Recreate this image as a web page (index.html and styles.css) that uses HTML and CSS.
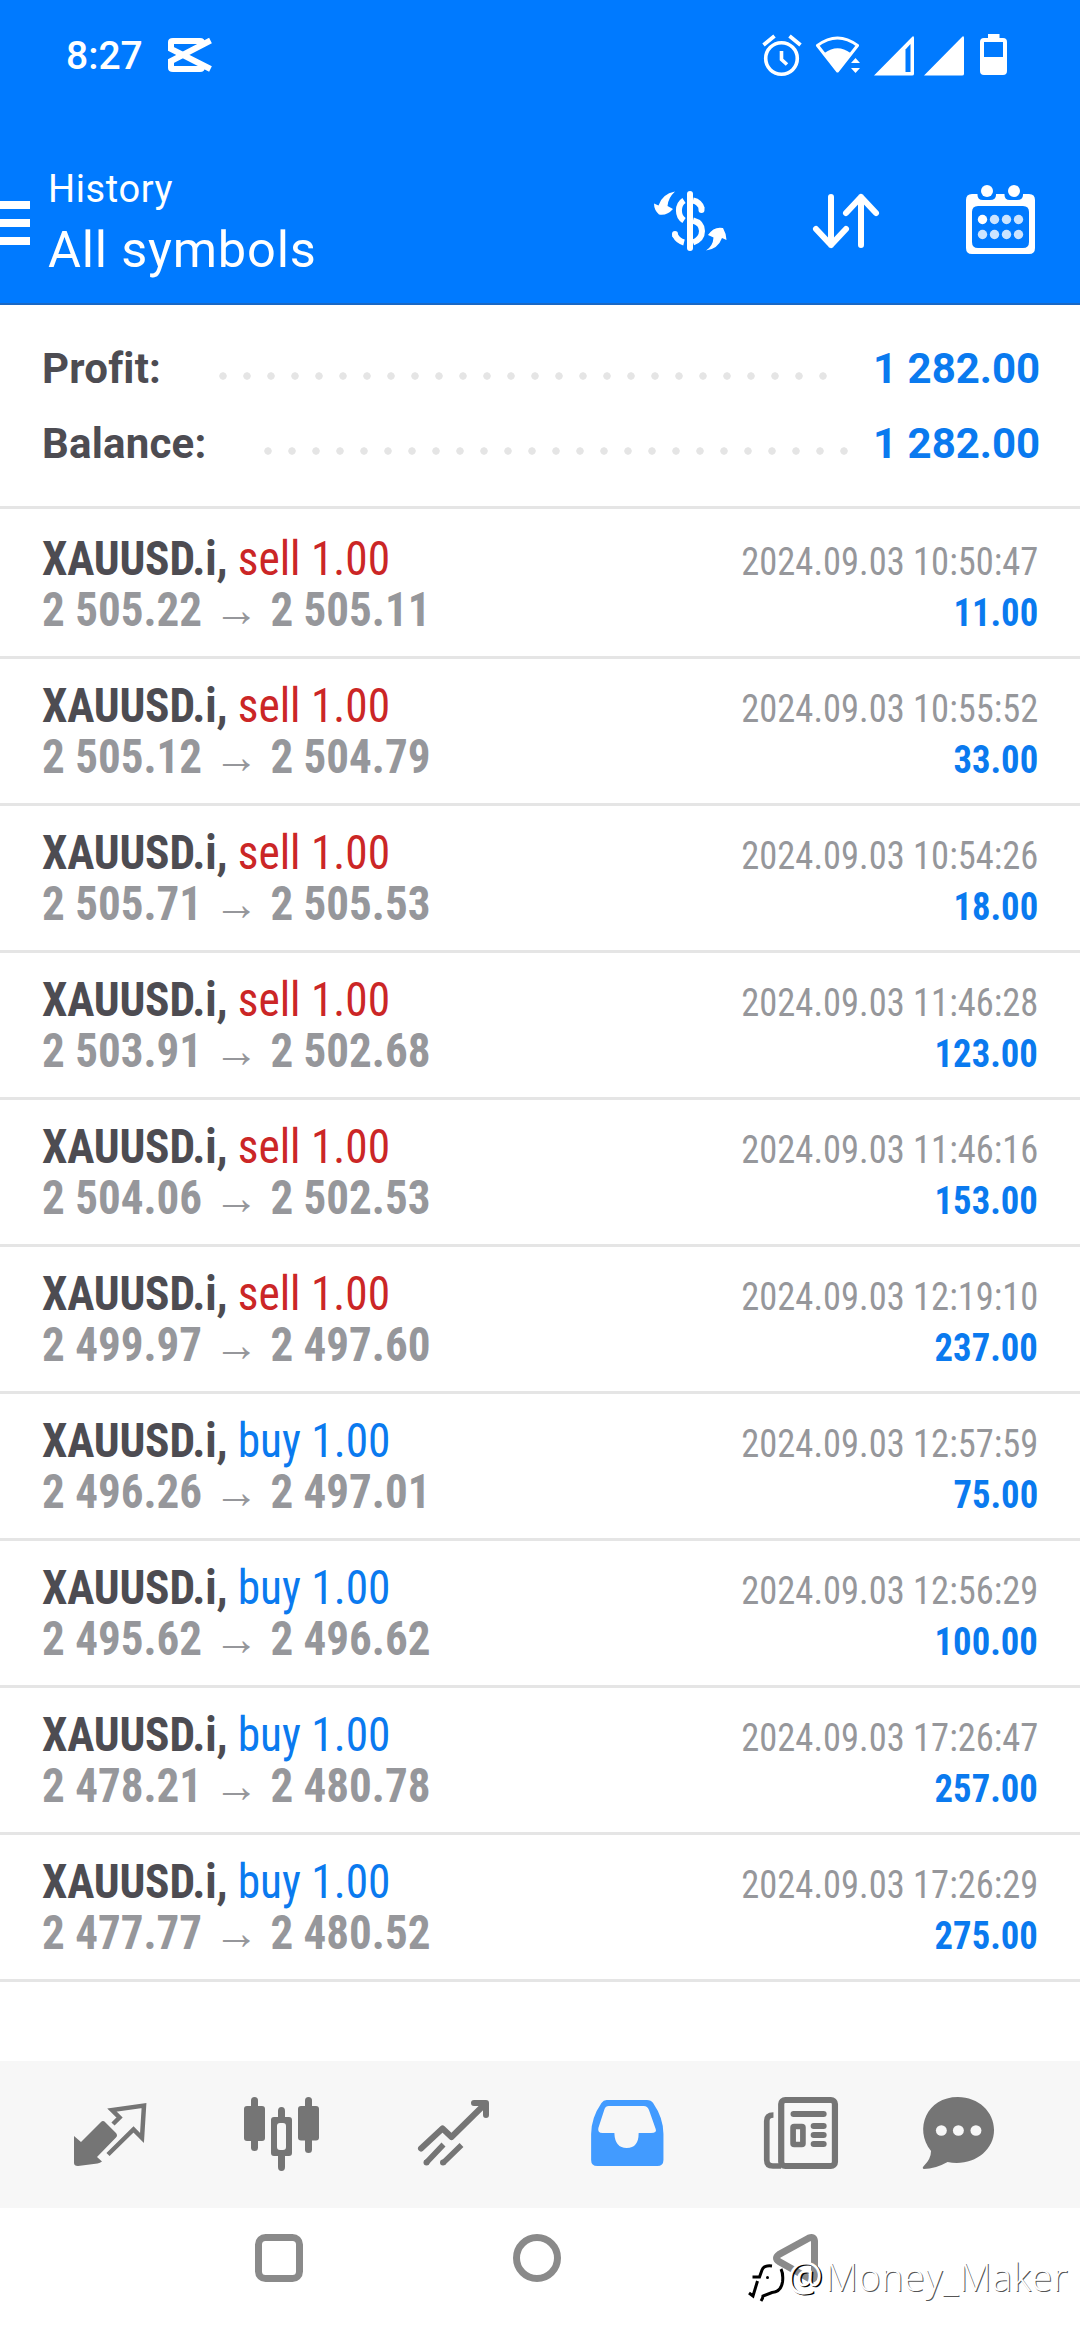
FILE: index.html
```html
<!DOCTYPE html>
<html lang="en">
<head>
<meta charset="utf-8">
<title>History</title>
<link rel="stylesheet" href="styles.css">
</head>
<body>
<header class="header">
  <div class="status">
    <div class="status-left">
      <span class="clock">8:27</span>
      <svg class="capcut" width="44" height="36" viewBox="0 0 44 36" fill="none" stroke="#fff" stroke-width="6"><path d="M42.500 3.500L3 24V31Q3 32 5 32H32Q34 32 34 30V27M42.500 32L3 12V5Q3 4 5 4H32Q34 4 34 6V8"/></svg>
    </div>
    <svg class="status-icons" width="246" height="44" viewBox="0 0 246 44">
      <g fill="none" stroke="#fff" stroke-width="3.600"><circle cx="19.500" cy="24.500" r="15.800"/><path d="M1.500 11L12.500 2M38.500 11L27.500 2" stroke-width="3.800"/><path d="M19.500 17V25.500L25 30.500"/>
      <path d="M55.500 11.500Q75.500-3.500 95.500 11.500L75.500 37Z" stroke-width="3" stroke-linejoin="round"/></g>
      <path fill="#fff" d="M62.500 19Q75.500 9.500 88.500 19L75.500 37.500ZM89 29L93.500 24L98 29ZM89 34L93.500 39L98 34ZM112 41.500L150.500 2.500Q152 1.500 152 4V40Q152 41.500 150 41.500ZM162 41.500L200.500 2.500Q202 1.500 202 4V40Q202 41.500 200 41.500ZM226 0H237.500V4H241Q245 4 245 8V37Q245 41 241 41H222Q218 41 218 37V8Q218 4 222 4H226ZM222 8V23H241V8Z" fill-rule="evenodd"/>
      <path fill="#007aff" d="M143.500 15.500L148.500 10V38H143.500Z"/>
    </svg>
  </div>
  <div class="toolbar">
    <svg class="menu" width="30" height="45" viewBox="0 0 30 45" fill="#fff"><path d="M0 0H30V8H0ZM0 18H30V26H0ZM0 36H30V44H0Z"/></svg>
    <div class="titles"><div class="sub">History</div><div class="title">All symbols</div></div>
    <svg class="tools" width="384" height="72" viewBox="0 0 384 72">
      <g fill="none" stroke="#fff" stroke-width="6"><path d="M39 9V63" stroke-linecap="round"/><path d="M33 15.500A10 11.500 0 0 0 33 35.500" /><path d="M24 50Q27 56 33 57.500M42 15.500Q49 17 51 24" /><path d="M24 50L24 49M50.500 24.500L50.500 25" stroke-linecap="round"/><path d="M42 35.500Q51 38 51 46T42 57.500"/></g>
      <path fill="#fff" d="M24 6.500Q17 13 16.500 21L22 24Q16 31 8 29.500Q3 25 3 18.500L7.500 20.500Q11 9 24 6.500ZM55 65.500Q62 61 62.500 52.500L57 50Q63 41 72 43Q75 48 75.500 55L71 53Q67 64 55 65.500Z"/>
      <g fill="none" stroke="#fff" stroke-width="6" stroke-linecap="round" stroke-linejoin="round"><path d="M180 12V60M165 44L180 60L195 44M210 60V12M195 28L210 12L225 28"/></g>
      <path fill="#fff" fill-rule="evenodd" d="M321 9H326.500V10Q326.500 15 332 15H339Q345 15 345 10V9H353.500V10Q353.500 15 359 15H366Q372 15 372 10V9H378Q384 9 384 15V63Q384 69 378 69H321Q315 69 315 63V15Q315 9 321 9ZM327 21Q321 21 321 27V57Q321 63 327 63H372Q378 63 378 57V27Q378 21 372 21Z"/>
      <g fill="#fff"><circle cx="336" cy="6" r="6"/><circle cx="363" cy="6" r="6"/><circle cx="331.500" cy="34.500" r="4.700"/><g opacity=".8"><circle cx="343.500" cy="34.500" r="4.700"/><circle cx="355.500" cy="34.500" r="4.700"/><circle cx="367.500" cy="34.500" r="4.700"/><circle cx="331.500" cy="49.500" r="4.700"/><circle cx="343.500" cy="49.500" r="4.700"/><circle cx="355.500" cy="49.500" r="4.700"/><circle cx="367.500" cy="49.500" r="4.700"/></g></g>
    </svg>
  </div>
</header>
<section class="summary">
  <div class="sum-row"><span class="label">Profit:</span><span class="dots dots-profit"></span><span class="sum-value">1 282.00</span></div>
  <div class="sum-row"><span class="label">Balance:</span><span class="dots dots-balance"></span><span class="sum-value">1 282.00</span></div>
</section>
<main class="deals" id="deals"></main>
<nav class="tabs">
  <svg class="tab-icons" width="1080" height="147" viewBox="0 0 1080 147">
    <g fill="#757575"><path d="M74 75L81 81L101 61Q103 59 105.500 61.500L116 72Q118 74.500 116 76.500L97 96L102 100.500Q100 102 97.500 102.500L78 105Q74 105 74 102Z"/></g>
    <path d="M113 63L119.500 56.500L112 49L144 44.500L142 77L133.500 68.500L108 93.500" fill="none" stroke="#757575" stroke-width="4.500"/>
    <g fill="#757575"><rect x="244" y="45" width="21" height="35" rx="3"/><rect x="251" y="36" width="7" height="54" rx="3.500"/><rect x="298" y="45" width="21" height="34.500" rx="3"/><rect x="305" y="36" width="7" height="56" rx="3.500"/><path fill-rule="evenodd" d="M274 56H278V50Q278 46 281.500 46T285 50V56H289Q292 56 292 59V92Q292 95 289 95H285V106Q285 110 281.500 110T278 106V95H274Q271 95 271 92V59Q271 56 274 56ZM280 62Q277 62 277 65V86Q277 89 280 89H283Q286 89 286 86V65Q286 62 283 62Z"/></g>
    <g fill="none" stroke="#757575" stroke-width="6" stroke-linejoin="round" stroke-linecap="round"><path d="M421 87.500L442.500 67.500L451.500 76L485 43M474 42H486V54"/></g>
    <path d="M426 102L443.500 83.500M443 102L461.500 84" fill="none" stroke="#757575" stroke-width="5.500"/><circle cx="426.500" cy="101.500" r="3" fill="#757575"/><circle cx="443" cy="101.500" r="3" fill="#757575"/>
    <g transform="matrix(1.0331 0 0 1 -17.37 0)">
    <path fill="#429bff" fill-rule="evenodd" d="M604 39H643Q647 39 649 42Q659 57 659 73V99Q659 105 653 105H595Q589 105 589 99V73Q589 57 599 42Q601 39 604 39ZM606 45Q603 45 602 48L596 67Q595 72 600 72H611.500Q612 87 623.500 87T635 72H647Q653 72 651.500 68L645 49Q643.500 45 640 45Z"/>
    <g fill="none" stroke="#757575" stroke-width="6"><rect x="773" y="39" width="52" height="66" rx="4"/><path d="M765.500 54Q759 54 759 60V99Q759 105 765 105H773" stroke-width="5.500"/><path d="M785 53H814M804.500 65H814M804.500 74H814M804.500 83H814" stroke-linecap="round"/></g><rect x="784.500" y="65.500" width="9.500" height="18" fill="none" stroke="#757575" stroke-width="5.500" rx="1"/>
    <path fill="#757575" d="M944 36C964 36 979 51 979 69C979 91 957 106 934 101Q922 108 911 108Q909 107 911 105Q918 98 918 90C901 68 914 36 944 36Z"/><g fill="#f7f7f7"><circle cx="928" cy="69.500" r="5.300"/><circle cx="944.500" cy="69.500" r="5.300"/><circle cx="961.500" cy="69.500" r="5.300"/></g>
    </g>
  </svg>
</nav>
<footer class="sysnav">
  <svg width="1080" height="132" viewBox="0 0 1080 132" fill="none" stroke="#8a8a8a" stroke-width="7"><rect x="258.500" y="29.500" width="41" height="41" rx="7"/><circle cx="537" cy="50" r="20.500"/><path d="M809 30L779 46.500Q774 50 779 53.500L809 70.500Q814.500 73 814.500 67V33Q814 28 809 30Z"/></svg>
  <div class="watermark">
    <svg width="42" height="46" viewBox="0 0 42 46" fill="none"><path d="M27 10Q19 9 17 14L14.500 21H7.500M12.500 25L8 40L4 37M36 13Q38.500 18 37.500 26Q36 36 27 36.500L18 40Q18 42 16 45" stroke="#000" stroke-width="3"/><circle cx="22.500" cy="21.500" r="1.500" fill="#000"/></svg>
    <span class="wm-at">@</span><span class="wm-name">Money_Maker</span>
  </div>
</footer>
<script src="deals.js"></script>
</body>
</html>
```
FILE: styles.css
```css
* { box-sizing: border-box; }
body { margin: 0; width: 1080px; height: 2340px; display: flex; flex-direction: column; background: #fff; font-family: Roboto, "Liberation Sans", sans-serif; overflow: hidden; }
svg { display: block; flex: none; }
.header { height: 305px; background: #007aff; border-bottom: 2px solid #1a68c4; color: #fff; }
.status { height: 112px; padding: 34px 72px 0 66px; display: flex; justify-content: space-between; align-items: flex-start; }
.status-left { display: flex; align-items: flex-start; gap: 25px; }
.clock { font-size: 39px; line-height: 45px; font-weight: 500; }
.capcut { margin-top: 3px; }
.toolbar { height: 190px; display: flex; align-items: flex-start; }
.menu { margin-top: 89px; }
.titles { padding: 49px 0 0 18px; flex: 1; }
.sub { font-size: 38px; line-height: 56px; letter-spacing: .6px; }
.title { font-size: 50.5px; line-height: 66px; letter-spacing: .8px; }
.tools { margin: 73px 45px 0 0; }
.summary { height: 204px; padding: 26px 42px 0; border-bottom: 3px solid #e5e5e5; }
.sum-row { height: 75px; display: flex; align-items: center; font-size: 42px; font-weight: 700; line-height: 75px; }
.label { color: #4d4c52; letter-spacing: .2px; }
.sum-value { color: #0a7aef; width: 164px; margin-left: -1px; margin-right: 1px; text-align: right; white-space: nowrap; }
.dots { height: 8px; background: radial-gradient(circle at 4px 4px, #e5e5e5 3.400px, transparent 4px) 0 0 / 24px 8px; margin: 14px 47px 0 auto; }
.dots-profit { width: 608px; }
.dots-balance { width: 584px; margin-right: 26px; }
.deals { flex: 1; }
.deal { height: 147px; padding: 21px 42px 0; border-bottom: 3px solid #e5e5e5; font-family: "Roboto Condensed", Roboto, sans-serif; font-stretch: 75%; }
.deal:first-child { height: 150px; padding-top: 24px; }
.line { display: flex; justify-content: space-between; height: 51px; align-items: baseline; line-height: 51px; white-space: pre; }
.main { font-size: 48px; transform: scaleX(.945); transform-origin: left; }
.symbol { font-weight: 700; color: #4d4c52; letter-spacing: -.2px; }
.sell { color: #cb2626; }
.buy { color: #0a7aef; }
.prices { display: flex; align-items: baseline; font-size: 48px; font-weight: 700; color: #96979b; transform: scaleX(.938); transform-origin: left; }
.arrow { width: 73px; text-align: center; }
.date { font-size: 39px; color: #96979b; transform: scaleX(.936); transform-origin: right; }
.profit { font-size: 39px; font-weight: 700; color: #0a7aef; transform: scaleX(.94); transform-origin: right; }
.tabs { height: 147px; background: #f7f7f7; }
.sysnav { height: 132px; position: relative; }
.watermark { position: absolute; left: 745px; top: 48px; display: flex; color: #fff; font-family: "Open Sans", sans-serif; font-weight: 300; font-size: 38px; line-height: 56px; letter-spacing: .4px; text-shadow: 1px 1px 0 #555; }
.wm-at, .wm-name { margin-top: -8px; }
.wm-at { width: 38px; font-weight: 400; font-size: 40px; text-shadow: 1.500px 1px 0 #000; }
```
FILE: deals.js
```javascript
const deals = [
  ["sell", "2 505.22", "2 505.11", "10:50:47", "11.00"],
  ["sell", "2 505.12", "2 504.79", "10:55:52", "33.00"],
  ["sell", "2 505.71", "2 505.53", "10:54:26", "18.00"],
  ["sell", "2 503.91", "2 502.68", "11:46:28", "123.00"],
  ["sell", "2 504.06", "2 502.53", "11:46:16", "153.00"],
  ["sell", "2 499.97", "2 497.60", "12:19:10", "237.00"],
  ["buy", "2 496.26", "2 497.01", "12:57:59", "75.00"],
  ["buy", "2 495.62", "2 496.62", "12:56:29", "100.00"],
  ["buy", "2 478.21", "2 480.78", "17:26:47", "257.00"],
  ["buy", "2 477.77", "2 480.52", "17:26:29", "275.00"]
];
document.getElementById("deals").innerHTML = deals.map(([side, open, close, time, profit]) => `
  <article class="deal">
    <div class="line"><span class="main"><span class="symbol">XAUUSD.i,</span> <span class="${side}">${side} 1.00</span></span><span class="date">2024.09.03 ${time}</span></div>
    <div class="line"><span class="prices"><span>${open}</span><span class="arrow">→</span><span>${close}</span></span><span class="profit">${profit}</span></div>
  </article>`).join("");
```
